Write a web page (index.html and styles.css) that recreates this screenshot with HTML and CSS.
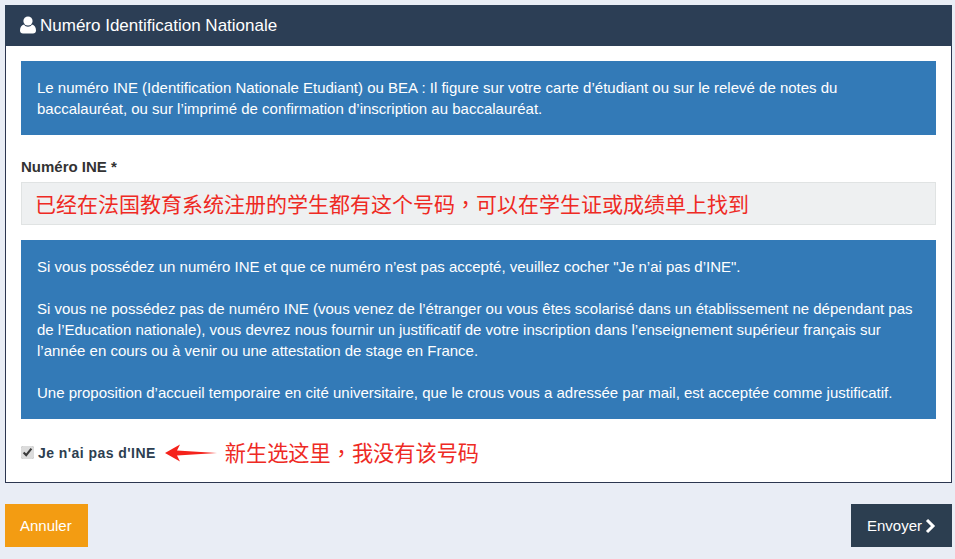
FILE: index.html
```html
<!DOCTYPE html>
<html>
<head>
  <meta charset="UTF-8">
  <title>Numéro Identification Nationale</title>
  <link rel="stylesheet" href="styles.css">
</head>
<body>
  <div class="panel">
    <div class="panel-head">
      <svg class="user-icon" viewBox="0 0 16 18" width="16" height="18">
        <circle cx="8" cy="5" r="4.6" fill="#fff"/>
        <path d="M4 8.5C5 10 6.400 10.700 8 10.700S11 10 12 8.500C14.500 9 16 11 16 14.500 16 16.500 14.800 17.500 13 17.500H3C1.200 17.500 0 16.500 0 14.500 0 11 1.500 9 4 8.500Z" fill="#fff"/>
      </svg>
      <span>Numéro Identification Nationale</span>
    </div>
    <div class="panel-body">
      <div class="info">
        Le numéro INE (Identification Nationale Etudiant) ou BEA : Il figure sur votre carte d’étudiant ou sur le relevé de notes du<br>
        baccalauréat, ou sur l’imprimé de confirmation d’inscription au baccalauréat.
      </div>
      <label class="field-label">Numéro INE *</label>
      <div class="field-input">已经在法国教育系统注册的学生都有这个号码，可以在学生证或成绩单上找到</div>
      <div class="info">
        <p>Si vous possédez un numéro INE et que ce numéro n’est pas accepté, veuillez cocher "Je n’ai pas d’INE".</p>
        <p>Si vous ne possédez pas de numéro INE (vous venez de l’étranger ou vous êtes scolarisé dans un établissement ne dépendant pas<br>
        de l’Education nationale), vous devrez nous fournir un justificatif de votre inscription dans l’enseignement supérieur français sur<br>
        l’année en cours ou à venir ou une attestation de stage en France.</p>
        <p>Une proposition d’accueil temporaire en cité universitaire, que le crous vous a adressée par mail, est acceptée comme justificatif.</p>
      </div>
      <div class="check-row">
        <input type="checkbox" class="check" checked>
        <span class="check-label">Je n'ai pas d'INE</span>
        <svg class="arrow" viewBox="0 0 52 18" width="52" height="18">
          <path d="M0 9 15 .5 12 6.500 52 9 12 11.500 15 17.500Z" fill="#f5221b"/>
        </svg>
        <span class="note">新生选这里，我没有该号码</span>
      </div>
    </div>
  </div>
  <div class="actions">
    <a class="btn btn-cancel">Annuler</a>
    <a class="btn btn-send">Envoyer
      <svg viewBox="0 0 11 16" width="11" height="16">
        <path d="M2 2 8 8 2 14" fill="none" stroke="#fff" stroke-width="3"/>
      </svg>
    </a>
  </div>
</body>
</html>
```

FILE: styles.css
```css
body {
  margin: 0;
  padding: 5px 3px 12px 5px;
  background: #e9edf5;
  font-family: "Liberation Sans", "Noto Sans CJK TC", sans-serif;
  font-size: 15px;
  line-height: 21px;
  color: #2c3e50;
}
.panel {
  border: 1px solid #2c3650;
  border-top: 0;
  background: #fff;
}
.panel-head {
  display: flex;
  align-items: center;
  gap: 4px;
  height: 41px;
  margin: 0 -1px;
  padding-left: 15px;
  background: #2c3e55;
  color: #fff;
  font-size: 17px;
}
.user-icon {
  margin-bottom: 2px;
}
.panel-body {
  padding: 15px 15px 7px;
}
.info {
  padding: 16px;
  background: #337ab7;
  color: #fff;
}
.info p {
  margin: 0 0 21px;
}
.info p:last-child {
  margin-bottom: 0;
}
.field-label {
  display: block;
  margin-top: 21px;
  margin-bottom: 5px;
  font-weight: bold;
  color: #333;
}
.field-input {
  box-sizing: border-box;
  height: 43px;
  margin-bottom: 15px;
  padding-left: 13px;
  border: 1px solid #e0e3e3;
  background: #eef0f1;
  color: #ee2a24;
  font-size: 21px;
  line-height: 43px;
}
.check-row {
  display: flex;
  align-items: center;
  height: 44px;
  margin-top: 12px;
}
.check {
  width: 13px;
  height: 13px;
  margin: 0 4px 2px 0;
  accent-color: #dcdcdc;
}
.check-label {
  font-size: 14px;
  font-weight: bold;
  letter-spacing: 0.45px;
}
.arrow {
  margin-left: 9px;
}
.note {
  margin-left: 8px;
  color: #ee2a24;
  font-size: 21.200px;
}
.actions {
  display: flex;
  justify-content: space-between;
  margin-top: 21px;
}
.btn {
  display: flex;
  align-items: center;
  gap: 3px;
  height: 43px;
  color: #fff;
}
.btn-cancel {
  padding: 0 16px 0 15px;
  background: #f39c12;
}
.btn-send {
  padding: 0 16px;
  background: #2c3e50;
}
```
